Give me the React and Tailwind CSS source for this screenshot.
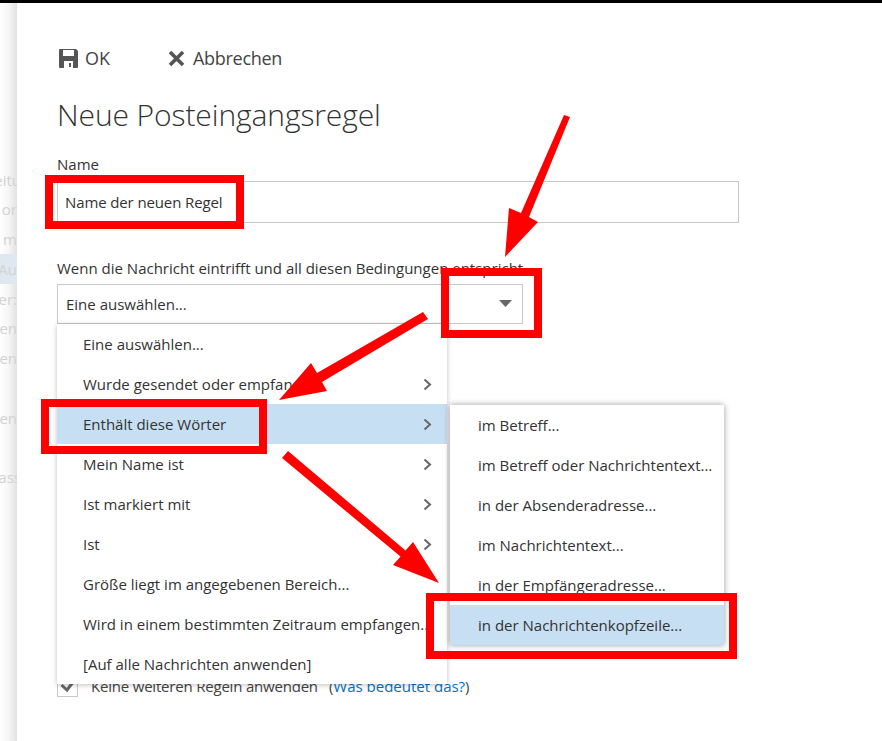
import React from "react";

const font = "font-['Open_Sans','Noto_Sans',sans-serif]";

const stripRows = [
  { text: "eitu", nudge: "-mr-[4px]" },
  { text: "or" },
  { text: "m" },
  { text: "Au", active: true },
  { text: "er:" },
  { text: "en" },
  { text: "en" },
  { text: "" },
  { text: "en" },
  { text: "" },
  { text: "ass", nudge: "-mr-[4px]" },
];

const menuItems = [
  { label: "Eine auswählen..." },
  { label: "Wurde gesendet oder empfangen", more: true },
  { label: "Enthält diese Wörter", more: true, active: true },
  { label: "Mein Name ist", more: true },
  { label: "Ist markiert mit", more: true },
  { label: "Ist", more: true },
  { label: "Größe liegt im angegebenen Bereich..." },
  { label: "Wird in einem bestimmten Zeitraum empfangen..." },
  { label: "[Auf alle Nachrichten anwenden]" },
];

const subItems = [
  { label: "im Betreff..." },
  { label: "im Betreff oder Nachrichtentext..." },
  { label: "in der Absenderadresse..." },
  { label: "im Nachrichtentext..." },
  { label: "in der Empfängeradresse..." },
  { label: "in der Nachrichtenkopfzeile...", active: true },
];

function Chevron() {
  return (
    <svg width="9" height="13" viewBox="0 0 9 13" className="shrink-0">
      <path d="M1.5 1.5 L7 6.5 L1.5 11.5" fill="none" stroke="#666" strokeWidth="2" />
    </svg>
  );
}

function MenuRow({ item, indent }) {
  return (
    <div
      className={`flex h-10 items-center justify-between overflow-hidden whitespace-nowrap ${
        item.active ? "bg-[#c7dff2]" : "bg-white"
      }`}
    >
      <span className={`${indent} text-[15px] text-[#333]`}>{item.label}</span>
      {item.more && (
        <span className="mr-[15px] flex">
          <Chevron />
        </span>
      )}
    </div>
  );
}

function RedBox({ className }) {
  return <div className={`absolute border-[8px] border-[#ff0000] ${className}`} />;
}

export default function App() {
  return (
    <div className={`relative h-screen w-full overflow-hidden bg-white ${font}`}>
      <div className="h-[3px] bg-black" />

      <div className="flex">
        {/* dimmed page behind the panel */}
        <div className="h-[738px] w-[17px] shrink-0 overflow-hidden bg-gradient-to-r from-white via-[#f6f6f6] to-[#e2e2e2] pt-[162px] text-[15px] text-[#d2d2d2]">
          {stripRows.map((row, i) => (
            <div
              key={i}
              className={`flex h-[29.75px] items-center justify-end overflow-hidden whitespace-nowrap ${
                row.active ? "bg-[#dfe8f0]" : ""
              }`}
            >
              <span className={row.nudge}>{row.text}</span>
            </div>
          ))}
        </div>

        <div className="relative flex-1 pl-10">
          {/* toolbar */}
          <div className="mt-[41px] flex h-7 items-center text-[18px] text-[#444]">
            <svg width="20" height="19" viewBox="0 0 20 19" className="ml-[2px]">
              <path
                fillRule="evenodd"
                d="M1 0h16l2 2v16a1 1 0 0 1-1 1H1a1 1 0 0 1-1-1V1a1 1 0 0 1 1-1zM4 1v6h11V1zM5 12v7h9v-7zM10 14h2v4h-2z"
                fill="#555"
              />
            </svg>
            <span className="ml-[6px]">OK</span>
            <svg width="17" height="17" viewBox="0 0 17 17" className="ml-[58px]">
              <path d="M2 2 L15 15 M15 2 L2 15" stroke="#555" strokeWidth="3.6" fill="none" />
            </svg>
            <span className="ml-[8px] tracking-[-0.3px]">Abbrechen</span>
          </div>

          <h1 className="mt-[21px] h-11 text-[30px] leading-[44px] font-light tracking-[-0.1px] text-[#333]">
            Neue Posteingangsregel
          </h1>

          <label className="mt-[17px] block h-5 text-[15px] leading-5 text-[#333]">Name</label>
          <input
            readOnly
            value="Name der neuen Regel"
            className="mt-[7px] block h-[42px] w-[682px] border border-[#c8c8c8] pl-[7px] text-[15px] tracking-[-0.12px] text-[#333] outline-none"
          />

          <label className="mt-[35px] block h-5 text-[15px] leading-5 whitespace-nowrap text-[#333]">
            Wenn die Nachricht eintrifft und all diesen Bedingungen entspricht
          </label>
          <div className="mt-[6px] flex h-10 w-[466px] items-center justify-between border border-[#c8c8c8] pr-[9px] pl-2 text-[15px] text-[#333]">
            <span>Eine auswählen...</span>
            <svg width="14" height="8" viewBox="0 0 14 8">
              <path d="M0 0h13l-6.5 7z" fill="#666" />
            </svg>
          </div>

          <div className="mt-[351px] flex h-[22px] items-center text-[15px] whitespace-nowrap text-[#444]">
            <span className="flex h-[21px] w-[21px] items-center justify-center border border-[#c8c8c8]">
              <svg width="15" height="12" viewBox="0 0 15 12">
                <path d="M1.5 5 L7 10 L13.5 1.5" fill="none" stroke="#666" strokeWidth="3" />
              </svg>
            </span>
            <span className="ml-[13px] tracking-[-0.2px]">Keine weiteren Regeln anwenden</span>
            <span className="ml-[11px]">
              (<span className="text-[#0072c6]">Was bedeutet das?</span>)
            </span>
          </div>
        </div>
      </div>

      {/* dropdown */}
      <div className="absolute top-[324px] left-[57px] w-[390px] bg-white shadow-[0_1px_5px_rgba(0,0,0,0.25)]">
        {menuItems.map((item) => (
          <MenuRow key={item.label} item={item} indent="ml-[26px]" />
        ))}
      </div>

      {/* submenu */}
      <div className="absolute top-[405px] left-[450px] w-[274px] bg-white shadow-[0_0_6px_rgba(0,0,0,0.4)]">
        {subItems.map((item) => (
          <MenuRow key={item.label} item={item} indent="ml-[28px]" />
        ))}
      </div>

      {/* annotations drawn on top of the screenshot */}
      <RedBox className="top-[175px] left-[45px] h-[54px] w-[199px]" />
      <RedBox className="top-[268px] left-[441px] h-[70px] w-[101px]" />
      <RedBox className="top-[399px] left-[41px] h-[55px] w-[226px]" />
      <RedBox className="top-[593px] left-[426px] h-[66px] w-[311px]" />

      <svg className="pointer-events-none absolute inset-0" width="882" height="741" viewBox="0 0 882 741">
        <polygon fill="#ff0000" points="564,115 570,117 529,217 538,222 505,257 509,208 521,213" />
        <polygon fill="#ff0000" points="423,312 428,319 322,382 327,391 279,400 311,363 317,373" />
        <polygon fill="#ff0000" points="288,451 282,458 400.5,556.6 393,565 439,583 413,542 405.5,550.4" />
      </svg>
    </div>
  );
}
